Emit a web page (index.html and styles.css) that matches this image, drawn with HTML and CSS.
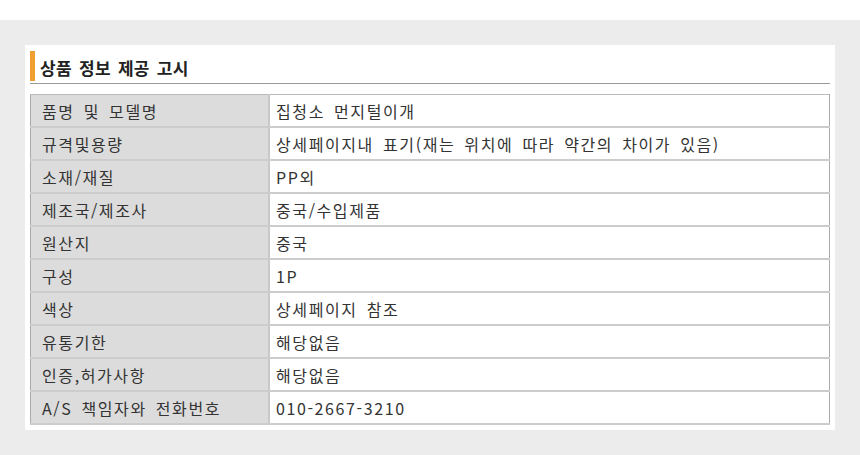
FILE: index.html
```html
<!DOCTYPE html>
<html lang="ko">
<head>
<meta charset="utf-8">
<link rel="stylesheet" href="styles.css">
</head>
<body>
<div class="top"></div>
<div class="stage">
  <div class="panel">
    <h2 class="title">상품 정보 제공 고시</h2>
    <table class="info">
      <tr><th>품명 및 모델명</th><td>집청소 먼지털이개</td></tr>
      <tr><th>규격및용량</th><td>상세페이지내 표기(재는 위치에 따라 약간의 차이가 있음)</td></tr>
      <tr><th>소재/재질</th><td>PP외</td></tr>
      <tr><th>제조국/제조사</th><td>중국/수입제품</td></tr>
      <tr><th>원산지</th><td>중국</td></tr>
      <tr><th>구성</th><td>1P</td></tr>
      <tr><th>색상</th><td>상세페이지 참조</td></tr>
      <tr><th>유통기한</th><td>해당없음</td></tr>
      <tr><th>인증,허가사항</th><td>해당없음</td></tr>
      <tr><th>A/S 책임자와 전화번호</th><td>010-2667-3210</td></tr>
    </table>
  </div>
</div>
</body>
</html>
```
FILE: styles.css
```css
html, body { margin: 0; padding: 0; }
body {
  width: 860px; height: 455px; overflow: hidden;
  background: #ececec;
  font-family: "Noto Sans CJK KR", "Noto Sans", sans-serif;
  color: #333;
}
.top { height: 20px; background: #fff; }
.stage { padding: 25px 25px 0 25px; }
.panel {
  width: 800px; height: 374px;
  background: #fff;
  padding: 6px 5px 5px 5px;
}
.title {
  margin: 0;
  height: 32px;
  border-bottom: 1px solid #999;
  display: flex; align-items: center;
  font-size: 17px; font-weight: bold; color: #222;
  letter-spacing: 0.3px; word-spacing: 2px;
  position: relative;
  padding-left: 10px;
  line-height: 1;
}
.title::before {
  content: ""; position: absolute; left: 0; top: 0;
  width: 5px; height: 30px; background: #f0a030;
}
.info {
  margin-top: 10px;
  width: 800px;
  border-collapse: collapse;
  border: 1px solid #aaa;
  border-top: 1px solid #bbb;
}
.info th, .info td {
  height: 31px;
  padding: 0 0 0 11px;
  border-bottom: 2px solid #ccc;
  font-size: 16px; font-weight: normal;
  letter-spacing: 1.6px; word-spacing: 3px;
  text-align: left;
  color: #333;
}
.info th {
  width: 226px;
  background: #dcdcdc;
  border-right: 2px solid #c8c8c8;
}
.info td { padding-left: 6px; }
```
